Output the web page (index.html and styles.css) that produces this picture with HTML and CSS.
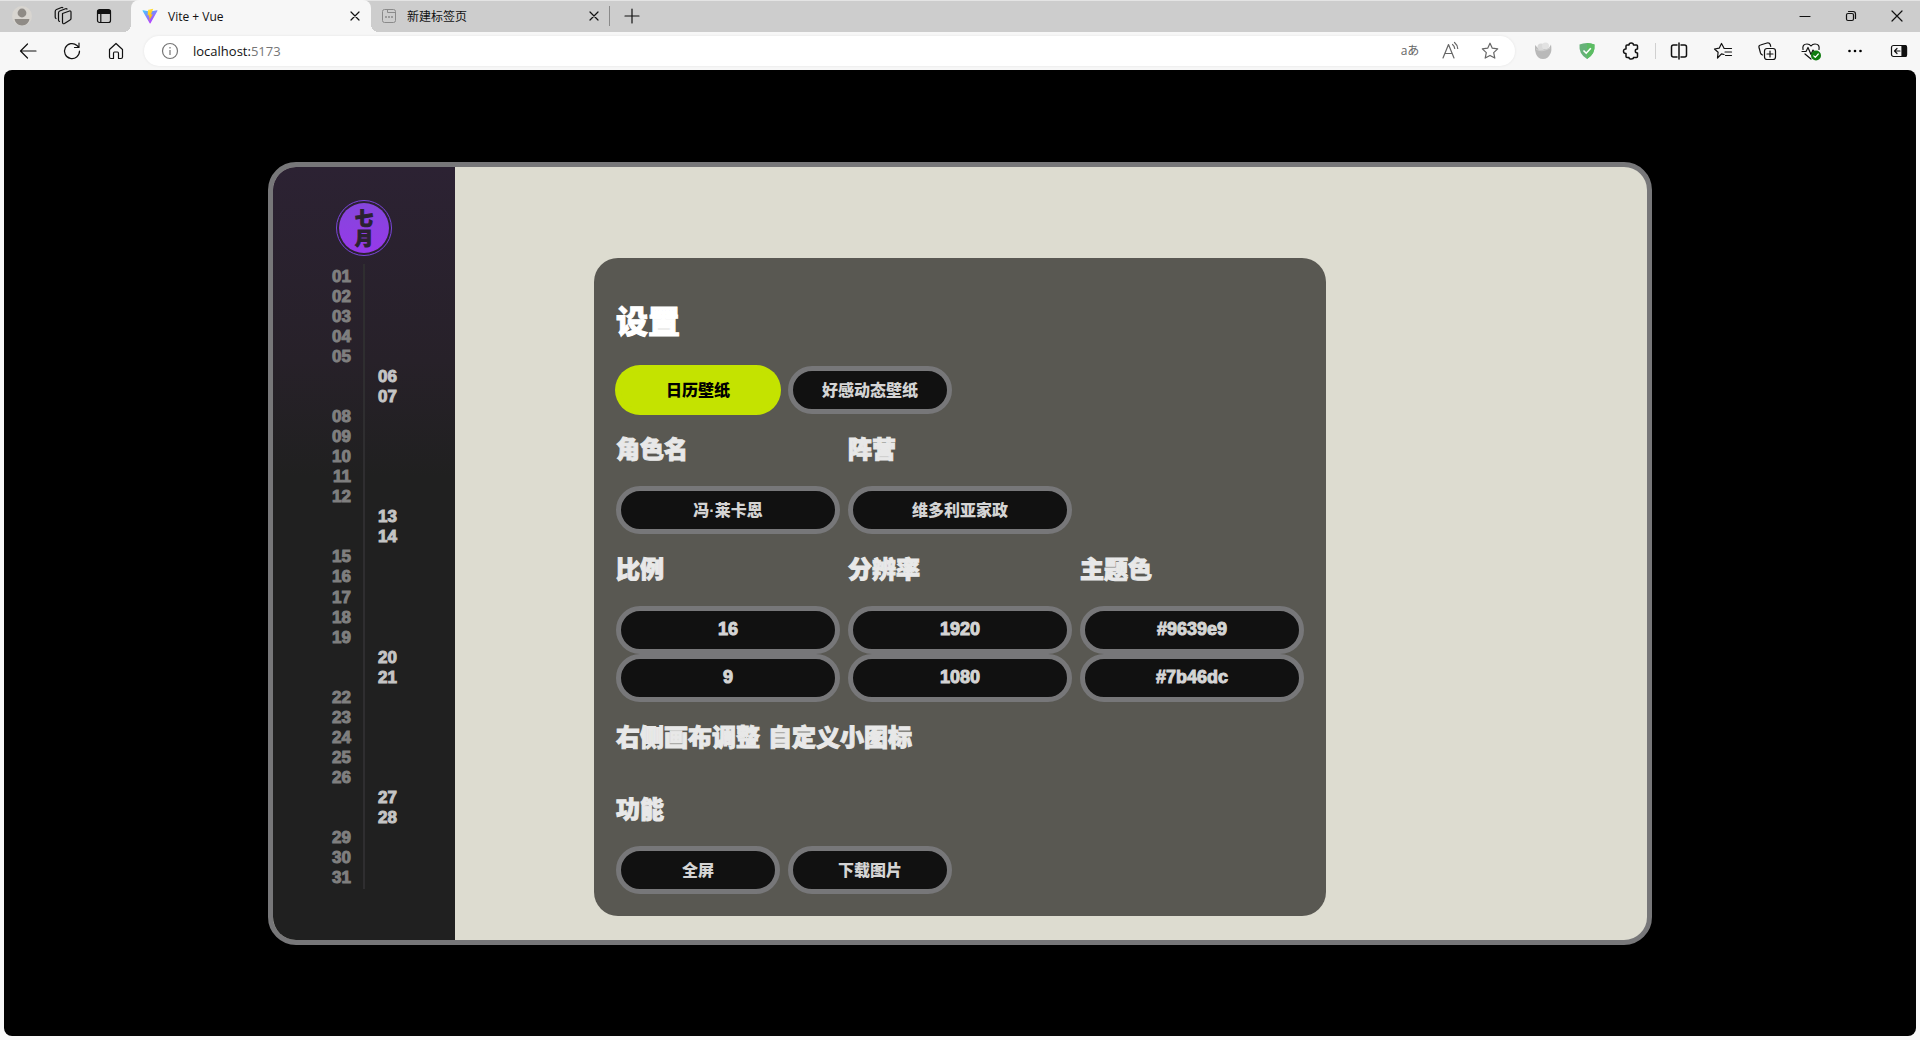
FILE: index.html
```html
<!DOCTYPE html>
<html lang="zh-CN">
<head>
<meta charset="utf-8">
<title>Vite + Vue</title>
<link rel="stylesheet" href="styles.css">
</head>
<body>
<header class="browser">
  <div class="tabstrip">
    <div class="strip-tools">
      <button class="icon-btn" aria-label="个人资料"><svg viewBox="0 0 20 20"><circle cx="10" cy="10" r="10" fill="#d8d5d0"/><circle cx="10" cy="7" r="4.4" fill="#8f8b86"/><path d="M2.600 13h14.800C16.800 17 13.800 19.400 10 19.400S3.200 17 2.600 13z" fill="#8f8b86"/></svg></button>
      <button class="icon-btn" aria-label="工作区"><svg viewBox="0 0 20 20" class="line"><path d="M9.500 7.500l7-2.500q1.500-.3 1.500 1.200v6.300q0 1-1 1.500l-5.500 3.500q-2 .8-2-1.200z"/><path d="M6.500 15.500q-1-.3-1-1.500V7q0-1.500 1.200-2l5.800-2.300q1-.3 1.500.3"/><path d="M3 12.500q-.8-.4-.8-1.500V5.500Q2.200 4 3.500 3.500L8.500 1.500q.8-.2 1.300.2"/></svg></button>
      <button class="icon-btn" aria-label="垂直标签页"><svg viewBox="0 0 20 20" class="line"><rect x="3.500" y="3.500" width="13" height="13" rx="2"/><path d="M4 4.500h12v3H4z" fill="#111"/><path d="M6.800 8v8"/></svg></button>
    </div>
    <div class="tab tab-active">
      <svg class="favicon" viewBox="0 0 32 32"><defs><linearGradient id="va" x1="0" y1="0" x2=".6" y2="1"><stop offset="0" stop-color="#41d1ff"/><stop offset="1" stop-color="#bd34fe"/></linearGradient><linearGradient id="vb" x1=".4" y1="0" x2=".6" y2="1"><stop offset="0" stop-color="#ffea83"/><stop offset=".1" stop-color="#ffdd35"/><stop offset="1" stop-color="#ffa800"/></linearGradient></defs><path fill="url(#va)" d="M31 5.500L17 30.500q-.8 1-1.600 0L1 5.500q-.5-1.300 1-1.200l14 2.500L30 4.300q1.400 0 1 1.200z"/><path fill="url(#vb)" d="M22.500 1.500L12 3.500l-.7 11.500 3.200-.7-1 4.800 2-.6-1.500 7.300 7.500-13.500-3.700.7z"/></svg>
      <span class="tab-title">Vite + Vue</span>
      <button class="tab-close" aria-label="关闭标签页"><svg viewBox="0 0 10 10" class="line"><path d="M1 1l8 8M9 1l-8 8"/></svg></button>
    </div>
    <div class="tab">
      <svg class="favicon gray" viewBox="0 0 16 16"><rect x="1.500" y="1.500" width="13" height="13" rx="2"/><path d="M6.500 1.500v3h8" /><path d="M4 9h2M7 9h2M10 9h2" stroke-width="1.500"/></svg>
      <span class="tab-title">新建标签页</span>
      <button class="tab-close" aria-label="关闭标签页"><svg viewBox="0 0 10 10" class="line"><path d="M1 1l8 8M9 1l-8 8"/></svg></button>
    </div>
    <span class="tab-rule"></span>
    <button class="new-tab" aria-label="新建标签页"><svg viewBox="0 0 16 16" class="line"><path d="M8 1v14M1 8h14"/></svg></button>
    <div class="window-buttons">
      <button aria-label="最小化"><svg viewBox="0 0 12 12" class="line"><path d="M1 6.500h10"/></svg></button>
      <button aria-label="还原"><svg viewBox="0 0 12 12" class="line"><rect x="1.500" y="3.500" width="7" height="7" rx="1.500"/><path d="M3.500 1.500H8q2.500 0 2.500 2.500v4.500"/></svg></button>
      <button aria-label="关闭"><svg viewBox="0 0 12 12" class="line"><path d="M1 1l10 10M11 1L1 11"/></svg></button>
    </div>
  </div>
  <div class="toolbar">
    <div class="nav-tools">
      <button class="icon-btn" aria-label="后退"><svg viewBox="0 0 20 20" class="line"><path d="M18 10H2.500M9.500 3L2.500 10l7 7"/></svg></button>
      <button class="icon-btn" aria-label="刷新"><svg viewBox="0 0 20 20" class="line"><path d="M17.500 10A7.500 7.500 0 1 1 15 4.500l1.500 1.500M17 2v4.500h-4.500"/></svg></button>
      <button class="icon-btn" aria-label="主页"><svg viewBox="0 0 20 20" class="line"><path d="M3.500 8.500L10 2.500l6.500 6v7.500q0 1.500-1.500 1.500h-2.500v-5q0-1.500-1-1.500h-3q-1 0-1 1.500v5H5q-1.500 0-1.500-1.500z"/></svg></button>
    </div>
    <div class="address">
      <svg class="info" viewBox="0 0 18 18"><circle cx="9" cy="9" r="7.500"/><path d="M9 8v5M9 5v1.400"/></svg>
      <a class="url" href="#">localhost:<span>5173</span></a>
      <div class="address-tools">
        <button class="icon-btn translate" aria-label="翻译">aあ</button>
        <button class="icon-btn" aria-label="大声朗读"><svg viewBox="0 0 20 20" class="line gray"><path d="M3 17L8.500 3.500 14 17M5 12.500h7M12.500 3.500q2 1.500 2.200 4M14.500 1.500q3 2.500 3.200 6"/></svg></button>
        <button class="icon-btn" aria-label="收藏"><svg viewBox="0 0 20 20" class="line gray"><path d="M10 2.200l2.300 5 5.400.7-4 3.700 1.100 5.500L10 14.400l-4.800 2.700 1.100-5.500-4-3.700 5.400-.7z"/></svg></button>
      </div>
    </div>
    <div class="extensions">
      <button class="icon-btn" aria-label="扩展"><svg viewBox="0 0 20 20"><path d="M2 4l3 3h11l2-3.500q1 6-.5 9Q15 18 10 18t-7-5Q1.500 9 2 4z" fill="#b9b9b9"/><circle cx="8" cy="6" r="3.500" fill="#d9d9d9"/><circle cx="12.500" cy="5" r="3.500" fill="#e2e2e2"/><path d="M3 8q5 4 14-1" stroke="#cfcfcf" fill="none"/></svg></button>
      <button class="icon-btn" aria-label="广告拦截"><svg viewBox="0 0 20 20"><path d="M10 2q4 0 7.500 1.500 1 9.500-7.500 14.500Q1.500 13 2.500 3.500 6 2 10 2z" fill="#67b279"/><path d="M10 2q4 0 7.500 1.500 1 9.500-7.500 14.500z" fill="#5cbd63"/><path d="M6.500 9.500l2.700 2.700 4.600-5" fill="none" stroke="#fff" stroke-width="1.600"/></svg></button>
      <button class="icon-btn" aria-label="扩展管理"><svg viewBox="0 0 20 20" class="line bold"><path d="M6 4h2q0-2 2.200-2t2.300 2h3q1 0 1 1v3q-2.200 0-2.200 2t2.200 2v3.500q0 1-1 1h-3q0 1.500-2.300 1.500T8 16.500H6q-1 0-1-1V12.500q-2.500 0-2.500-2.300T5 8V5q0-1 1-1z"/></svg></button>
    </div>
    <div class="browser-tools">
      <button class="icon-btn" aria-label="分屏"><svg viewBox="0 0 20 20" class="line bold"><path d="M10 2v16M8 4H4.500Q2.500 4 2.500 6v8q0 2 2 2H8M12 4h3.500q2 0 2 2v8q0 2-2 2H12"/></svg></button>
      <button class="icon-btn" aria-label="收藏夹"><svg viewBox="0 0 20 20" class="line"><path d="M11 13.500L8.500 12.800 4.500 17l.6-5.700L1.500 8l4.700-.8L8.500 2.500l2.300 4.300M11 7.500h7.500M12 11h6.500M12.500 14.500h6"/></svg></button>
      <button class="icon-btn" aria-label="集锦"><svg viewBox="0 0 20 20" class="line"><rect x="7.500" y="7.500" width="11" height="11" rx="2.500"/><path d="M13 10v6M10 13h6M5.500 14Q4 13.500 3.500 12L2 6.500Q1.500 4.500 3.500 4L10 2q2.500-.5 3.200 1.500l.5 1.800"/></svg></button>
      <button class="icon-btn" aria-label="浏览器概要"><svg viewBox="0 0 20 20" class="line"><path d="M2 8.500Q1 3 6 3q2.500 0 4 2 1.500-2 4-2 5 0 4 5.500M1 10.500h4l2-4 3 7 2-4.500 1 1.500h3M4 13l6 5"/><circle cx="15" cy="14.500" r="5" fill="#107c10" stroke="none"/><path d="M12.800 14.800l1.500 1.500 3-3.300" stroke="#fff"/></svg></button>
      <button class="icon-btn" aria-label="更多"><svg viewBox="0 0 20 20"><circle cx="4.500" cy="10" r="1.300"/><circle cx="10" cy="10" r="1.300"/><circle cx="15.500" cy="10" r="1.300"/></svg></button>
      <button class="icon-btn" aria-label="侧边栏"><svg viewBox="0 0 20 20" class="line"><rect x="2.500" y="4.500" width="15" height="11" rx="2"/><path d="M13 4.500h3q1.500 0 1.500 1.500v8q0 1.500-1.500 1.500h-3z" fill="#111"/><path d="M11 10H5.500M8 7.500L5.500 10 8 12.500"/></svg></button>
    </div>
  </div>
</header>

<main class="page">
  <div class="frame">
    <aside class="calendar">
      <div class="month"><div class="month-disc">七<br>月</div></div>
      <ol class="days">
        <li>01</li><li>02</li><li>03</li><li>04</li><li>05</li>
        <li class="weekend">06</li><li class="weekend">07</li>
        <li>08</li><li>09</li><li>10</li><li>11</li><li>12</li>
        <li class="weekend">13</li><li class="weekend">14</li>
        <li>15</li><li>16</li><li>17</li><li>18</li><li>19</li>
        <li class="weekend">20</li><li class="weekend">21</li>
        <li>22</li><li>23</li><li>24</li><li>25</li><li>26</li>
        <li class="weekend">27</li><li class="weekend">28</li>
        <li>29</li><li>30</li><li>31</li>
      </ol>
    </aside>
    <div class="overlay">
      <form class="settings">
        <h1>设置</h1>
        <div class="row">
          <button type="button" class="pill pill-active">日历壁纸</button>
          <button type="button" class="pill">好感动态壁纸</button>
        </div>
        <div class="fields">
          <div class="field"><label for="role">角色名</label><input class="pill" id="role" value="冯·莱卡恩"></div>
          <div class="field"><label for="camp">阵营</label><input class="pill" id="camp" value="维多利亚家政"></div>
        </div>
        <div class="fields">
          <div class="field"><label for="ratio">比例</label><input class="pill code" id="ratio" value="16"><input class="pill code" aria-label="比例高" value="9"></div>
          <div class="field"><label for="res">分辨率</label><input class="pill code" id="res" value="1920"><input class="pill code" aria-label="分辨率高" value="1080"></div>
          <div class="field"><label for="color">主题色</label><input class="pill code" id="color" value="#9639e9"><input class="pill code" aria-label="主题色二" value="#7b46dc"></div>
        </div>
        <div class="row"><h2>右侧画布调整</h2><h2>自定义小图标</h2></div>
        <h2>功能</h2>
        <div class="row">
          <button type="button" class="pill">全屏</button>
          <button type="button" class="pill">下载图片</button>
        </div>
      </form>
    </div>
  </div>
</main>
</body>
</html>
```
FILE: styles.css
```css
* { box-sizing: border-box; }

body {
  margin: 0;
  min-height: 100vh;
  display: flex;
  flex-direction: column;
  background: #f7f7f7;
  font-family: "Open Sans", "Noto Sans CJK SC", sans-serif;
  color: #111;
}

h1, h2, ol { margin: 0; padding: 0; }

button {
  padding: 0;
  border: 0;
  background: none;
  color: inherit;
  font: inherit;
}

svg { display: block; }

.line {
  fill: none;
  stroke: #111;
  stroke-width: 1.2;
  stroke-linecap: round;
  stroke-linejoin: round;
}

.line.bold { stroke-width: 1.5; }
.line.gray { stroke: #666; }

.icon-btn {
  width: 20px;
  height: 20px;
  flex: none;
}

/* Tab strip */
.tabstrip {
  display: flex;
  align-items: center;
  height: 32px;
  background: #cdcdcd;
  box-shadow: inset 0 1px #e4e4e4;
  font-size: 12px;
}

.strip-tools {
  display: flex;
  gap: 21px;
  width: 131px;
  padding-left: 12px;
}

.tab {
  position: relative;
  display: flex;
  align-items: center;
  width: 238px;
  height: 32px;
  padding: 0 10px;
}

.tab-active {
  width: 240px;
  padding: 0 11px;
  background: #f7f7f7;
  border-radius: 8px 8px 0 0;
}

.tab-active::before,
.tab-active::after {
  content: "";
  position: absolute;
  bottom: 0;
  width: 8px;
  height: 8px;
}

.tab-active::before {
  right: 100%;
  background: radial-gradient(circle at 0 0, #cdcdcd 8px, #f7f7f7 8px);
}

.tab-active::after {
  left: 100%;
  background: radial-gradient(circle at 100% 0, #cdcdcd 8px, #f7f7f7 8px);
}

.favicon {
  width: 16px;
  height: 16px;
  margin-right: 10px;
}

.favicon.gray { fill: none; stroke: #8a8a8a; }

.tab-title { flex: 1; }

.tab-close svg { width: 10px; height: 10px; }

.tab-rule {
  width: 1px;
  height: 20px;
  background: #8a8a8a;
}

.new-tab { margin-left: 14px; }
.new-tab svg { width: 16px; height: 16px; }

.window-buttons { display: flex; margin-left: auto; }

.window-buttons button {
  display: grid;
  place-items: center;
  width: 46px;
  height: 32px;
}

.window-buttons svg { width: 12px; height: 12px; }

/* Toolbar */
.toolbar {
  display: flex;
  align-items: center;
  height: 38px;
}

.nav-tools {
  display: flex;
  gap: 24px;
  width: 144px;
  padding-left: 18px;
}

.address {
  flex: 1;
  display: flex;
  align-items: center;
  height: 30px;
  padding: 0 15px 0 17px;
  border-radius: 15px;
  background: #fff;
  box-shadow: 0 0 3px rgba(0, 0, 0, .08);
}

.info {
  width: 18px;
  height: 18px;
  margin-right: 14px;
  fill: none;
  stroke: #767676;
  stroke-width: 1.2;
}

.url {
  flex: 1;
  color: #111;
  font-size: 13px;
  text-decoration: none;
}

.url span { color: #767676; }

.address-tools { display: flex; gap: 20px; }

.translate {
  color: #666;
  font-size: 12px;
  line-height: 18px;
  white-space: nowrap;
}

.extensions {
  display: flex;
  gap: 24px;
  padding: 0 14px 0 18px;
}

.browser-tools {
  display: flex;
  gap: 24px;
  padding: 0 11px 0 14px;
  background: linear-gradient(#d0d0d0, #d0d0d0) 0 50% / 1px 16px no-repeat;
}

/* Page viewport */
.page {
  flex: 1;
  display: flex;
  align-items: center;
  margin: 0 4px 4px;
  padding: 0 264px;
  border-radius: 8px;
  background: #000;
}

.frame {
  position: relative;
  flex: 1;
  display: flex;
  border: 5px solid #777779;
  border-radius: 28px;
  background: #dddcd0;
  aspect-ratio: 1384 / 783;
  overflow: hidden;
}

/* Calendar column */
.calendar {
  display: flex;
  flex-direction: column;
  align-items: center;
  gap: 8px;
  width: 182px;
  padding: 33px 0 51px;
  background: linear-gradient(#2c2233, #272129 25%, #202020 40%);
}

.month {
  flex: none;
  width: 56px;
  height: 56px;
  padding: 2px;
  border: 1px solid #7b46dc;
  border-radius: 50%;
}

.month-disc {
  height: 50px;
  padding-top: 4px;
  border-radius: 50%;
  background: linear-gradient(#8546dc, #9639e9);
  color: #2a2230;
  font: 900 18px/20px "Noto Sans CJK SC", sans-serif;
  text-align: center;
  -webkit-text-stroke: 1px;
}

.days {
  flex: 1;
  display: grid;
  grid-auto-rows: 1fr;
  width: 100%;
  padding-top: 3px;
  list-style: none;
  background: linear-gradient(#2f2e30, #2f2e30) 50% 0 / 2px 100% no-repeat;
  color: #7f7f7f;
  font: bold 17px/20px "Liberation Sans", sans-serif;
  -webkit-text-stroke: 1px;
}

.days li {
  width: 50%;
  padding-right: 13px;
  text-align: right;
}

.days .weekend {
  margin-left: 50%;
  padding: 0 0 0 14px;
  color: #c4c4c4;
  text-align: left;
}

/* Settings dialog */
.overlay {
  position: absolute;
  inset: 0;
  display: flex;
  justify-content: center;
  align-items: flex-end;
  padding-bottom: 24px;
}

.settings {
  width: 732px;
  padding: 20px 22px 22px;
  border-radius: 24px;
  background: #595852;
  color: #e8e8e8;
  font-family: "Liberation Sans", "Noto Sans CJK SC", sans-serif;
  font-weight: 900;
}

.settings h1,
.settings h2,
.field label {
  -webkit-text-stroke: 1px;
}

.settings h1 {
  color: #fff;
  font-size: 32px;
  font-weight: 900;
  line-height: 88px;
}

.settings h2,
.field label {
  display: block;
  font-size: 24px;
  font-weight: 900;
  line-height: 72px;
}

.row { display: flex; gap: 8px; }

.fields {
  display: grid;
  grid-template-columns: repeat(3, 1fr);
  gap: 8px;
}

.pill {
  display: block;
  width: 164px;
  height: 48px;
  padding: 0 0 2px;
  border: 5px solid #777779;
  border-radius: 24px;
  background: #111;
  color: #d4d4d4;
  font: inherit;
  font-size: 16px;
  text-align: center;
}

.field .pill { width: 100%; }

.field .code {
  padding: 0;
  font-size: 18px;
  -webkit-text-stroke: 1px;
}

.pill-active {
  border-color: #c4e300;
  background: #c4e300;
  box-shadow: 0 0 0 1px #c4e300;
  color: #000;
}
```
